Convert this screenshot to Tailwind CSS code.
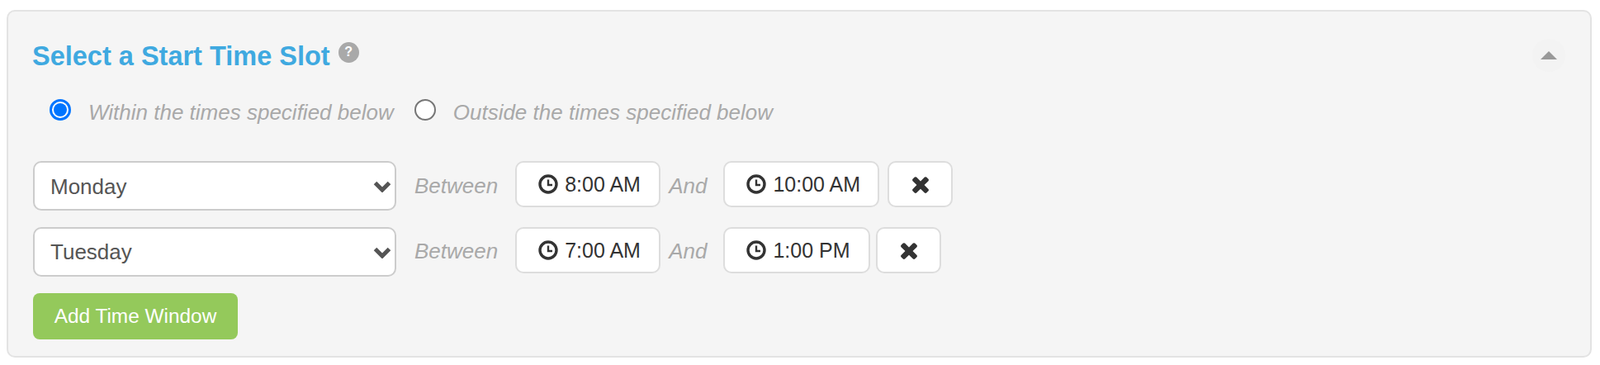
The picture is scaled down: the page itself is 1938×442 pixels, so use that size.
<!DOCTYPE html>
<html lang="en">
<head>
<meta charset="utf-8">
<title>Select a Start Time Slot</title>
<script src="https://cdn.jsdelivr.net/npm/@tailwindcss/browser@4"></script>
</head>
<body class="bg-white font-['Liberation_Sans',Arial,sans-serif]">
<div class="pt-[12px] pl-[8px]">
  <section class="relative w-[1920px] h-[421px] border-2 border-[#e3e3e3] rounded-[10px] bg-[#f5f5f5] pl-[30px] pt-[34px]">
    <div class="flex items-center h-[40px]">
      <h2 class="text-[32.5px] leading-[40px] font-bold text-[#3fa9e0] -ml-[1px]">Select a Start Time Slot</h2>
      <span class="ml-[10px] -mt-[10px] flex items-center justify-center w-[25px] h-[25px] rounded-full bg-[#a9a9a9] text-white text-[16px] leading-none font-bold">?</span>
    </div>
    <button class="absolute left-[1846px] top-[33px] w-[40px] h-[40px] rounded-full bg-[#f3f3f3] flex items-center justify-center" aria-label="Collapse">
      <svg width="20" height="10" viewBox="0 0 20 10"><path d="M10 0 L20 10 L0 10 Z" fill="#999999"/></svg>
    </button>
    <div class="mt-[27px] h-[35px] flex items-center pl-[20px] text-[26px] italic text-[#a9a9a9]">
      <span class="flex items-center justify-center w-[26px] h-[26px] rounded-full border-[3px] border-[#0075ff] bg-white"><span class="block w-[16px] h-[16px] rounded-full bg-[#0075ff]"></span></span>
      <span class="ml-[21px] mt-[7px]">Within the times specified below</span>
      <span class="ml-[25px] block w-[26px] h-[26px] rounded-full border-2 border-[#767676] bg-white"></span>
      <span class="ml-[21px] mt-[7px]">Outside the times specified below</span>
    </div>

    <div class="mt-[45px] flex items-start h-[60px]">
      <div class="relative w-[440px] h-[60px]">
        <select class="appearance-none w-full h-full border-2 border-[#cccccc] rounded-[10px] bg-white pl-[19px] pt-[2px] text-[26px] text-[#555555]"><option>Monday</option></select>
        <svg class="absolute left-[412px] top-[23px] pointer-events-none" width="22" height="15" viewBox="0 0 22 15"><path d="M2.5 3.5 L11 12 L19.5 3.5" fill="none" stroke="#555555" stroke-width="5"/></svg>
      </div>
      <span class="ml-[22px] h-[60px] flex items-center text-[26px] italic text-[#a9a9a9]">Between</span>
      <div class="ml-[21px] h-[56px] w-[176px] flex items-center pl-[26px] gap-[8px] border-2 border-[#dddddd] rounded-[10px] bg-white text-[25px] text-[#333333]">
        <svg width="24" height="24" viewBox="0 0 24 24"><circle cx="12" cy="12" r="10" fill="none" stroke="#333333" stroke-width="3.4"/><path d="M12 6.5 V13 H17" fill="none" stroke="#333333" stroke-width="2.4"/></svg>
        <span class="mt-[2px]">8:00 AM</span>
      </div>
      <span class="ml-[10px] h-[60px] flex items-center text-[26px] italic text-[#a9a9a9]">And</span>
      <div class="ml-[20px] h-[56px] w-[189px] flex items-center pl-[26px] gap-[8px] border-2 border-[#dddddd] rounded-[10px] bg-white text-[25px] text-[#333333]">
        <svg width="24" height="24" viewBox="0 0 24 24"><circle cx="12" cy="12" r="10" fill="none" stroke="#333333" stroke-width="3.4"/><path d="M12 6.5 V13 H17" fill="none" stroke="#333333" stroke-width="2.4"/></svg>
        <span class="mt-[2px]">10:00 AM</span>
      </div>
      <div class="ml-[10px] h-[56px] w-[79px] flex items-center justify-center border-2 border-[#dddddd] rounded-[10px] bg-white">
        <svg width="24" height="30" viewBox="0 0 1408 1792"><path fill="#333333" d="M1298 1322q0 40-28 68l-136 136q-28 28-68 28t-68-28l-294-294-294 294q-28 28-68 28t-68-28l-136-136q-28-28-28-68t28-68l294-294-294-294q-28-28-28-68t28-68l136-136q28-28 68-28t68 28l294 294 294-294q28-28 68-28t68 28l136 136q28 28 28 68t-28 68l-294 294 294 294q28 28 28 68z"/></svg>
      </div>
    </div>

    <div class="mt-[20px] flex items-start h-[60px]">
      <div class="relative w-[440px] h-[60px]">
        <select class="appearance-none w-full h-full border-2 border-[#cccccc] rounded-[10px] bg-white pl-[19px] text-[26px] text-[#555555]"><option>Tuesday</option></select>
        <svg class="absolute left-[412px] top-[23px] pointer-events-none" width="22" height="15" viewBox="0 0 22 15"><path d="M2.5 3.5 L11 12 L19.5 3.5" fill="none" stroke="#555555" stroke-width="5"/></svg>
      </div>
      <span class="ml-[22px] h-[58px] flex items-center text-[26px] italic text-[#a9a9a9]">Between</span>
      <div class="ml-[21px] h-[56px] w-[176px] flex items-center pl-[26px] gap-[8px] border-2 border-[#dddddd] rounded-[10px] bg-white text-[25px] text-[#333333]">
        <svg width="24" height="24" viewBox="0 0 24 24"><circle cx="12" cy="12" r="10" fill="none" stroke="#333333" stroke-width="3.4"/><path d="M12 6.5 V13 H17" fill="none" stroke="#333333" stroke-width="2.4"/></svg>
        <span class="mt-[2px]">7:00 AM</span>
      </div>
      <span class="ml-[10px] h-[58px] flex items-center text-[26px] italic text-[#a9a9a9]">And</span>
      <div class="ml-[20px] h-[56px] w-[178px] flex items-center pl-[26px] gap-[8px] border-2 border-[#dddddd] rounded-[10px] bg-white text-[25px] text-[#333333]">
        <svg width="24" height="24" viewBox="0 0 24 24"><circle cx="12" cy="12" r="10" fill="none" stroke="#333333" stroke-width="3.4"/><path d="M12 6.5 V13 H17" fill="none" stroke="#333333" stroke-width="2.4"/></svg>
        <span class="mt-[2px]">1:00 PM</span>
      </div>
      <div class="ml-[7px] h-[56px] w-[79px] flex items-center justify-center border-2 border-[#dddddd] rounded-[10px] bg-white">
        <svg width="24" height="30" viewBox="0 0 1408 1792"><path fill="#333333" d="M1298 1322q0 40-28 68l-136 136q-28 28-68 28t-68-28l-294-294-294 294q-28 28-68 28t-68-28l-136-136q-28-28-28-68t28-68l294-294-294-294q-28-28-28-68t28-68l136-136q28-28 68-28t68 28l294 294 294-294q28-28 68-28t68 28l136 136q28 28 28 68t-28 68l-294 294 294 294q28 28 28 68z"/></svg>
      </div>
    </div>

    <button class="mt-[20px] block w-[248px] h-[56px] rounded-[8px] bg-[#94c95b] text-white text-[24.4px]">Add Time Window</button>
  </section>
</div>
</body>
</html>
